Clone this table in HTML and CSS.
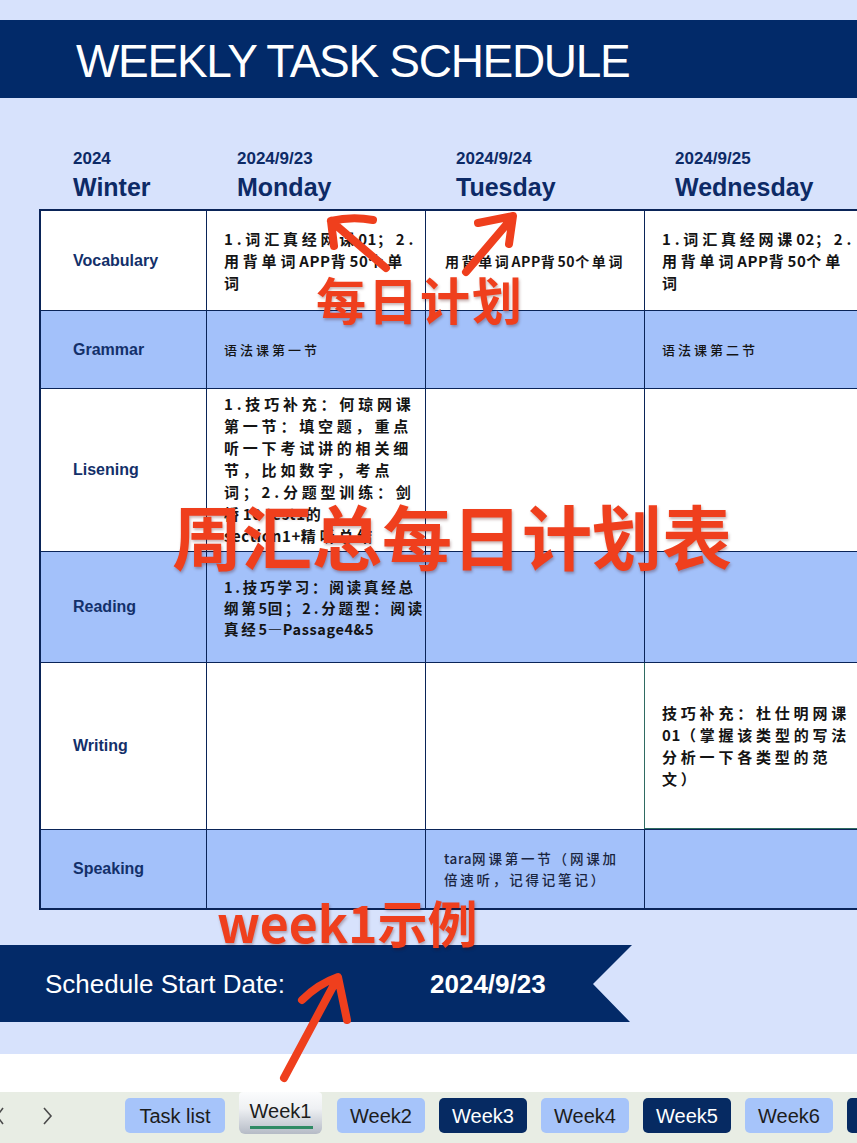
FILE: index.html
```html
<!DOCTYPE html>
<html lang="zh">
<head>
<meta charset="utf-8">
<title>Weekly Task Schedule</title>
<link rel="stylesheet" href="styles.css">
</head>
<body>
<header class="title-bar"><h1>WEEKLY TASK SCHEDULE</h1></header>

<div class="col-heads">
  <div class="col-head first"><div class="date">2024</div><div class="day">Winter</div></div>
  <div class="col-head"><div class="date">2024/9/23</div><div class="day">Monday</div></div>
  <div class="col-head"><div class="date">2024/9/24</div><div class="day">Tuesday</div></div>
  <div class="col-head"><div class="date">2024/9/25</div><div class="day">Wednesday</div></div>
</div>

<div class="schedule">
  <div class="row h-vocab">
    <div class="cell label">Vocabulary</div>
    <div class="cell task"><p>1.词汇真经网课<span class="lat">01</span>；2.<br>用背单词<span class="lat">APP</span>背<span class="lat">50</span>个单<br>词</p></div>
    <div class="cell task tue"><p class="mid">用背单词<span class="lat">APP</span>背<span class="lat">50</span>个单词</p></div>
    <div class="cell task"><p>1.词汇真经网课<span class="lat">02</span>；2.<br>用背单词<span class="lat">APP</span>背<span class="lat">50</span>个单<br>词</p></div>
  </div>
  <div class="row alt h-grammar">
    <div class="cell label">Grammar</div>
    <div class="cell task"><p class="thin">语法课第一节</p></div>
    <div class="cell task"></div>
    <div class="cell task"><p class="thin">语法课第二节</p></div>
  </div>
  <div class="row h-listen">
    <div class="cell label">Lisening</div>
    <div class="cell task"><p>1.技巧补充：何琼网课<br>第一节：填空题，重点<br>听一下考试讲的相关细<br>节，比如数字，考点<br>词；2.分题型训练：剑<br>桥<span class="lat">10 test1</span>的<br><span class="lat">section1+</span>精听总结</p></div>
    <div class="cell task"></div>
    <div class="cell task"></div>
  </div>
  <div class="row alt h-read">
    <div class="cell label">Reading</div>
    <div class="cell task"><p class="dense">1.技巧学习：阅读真经总<br>纲第<span class="lat">5</span>回；2.分题型：阅读<br>真经<span class="lat">5—Passage4&amp;5</span></p></div>
    <div class="cell task"></div>
    <div class="cell task"></div>
  </div>
  <div class="row h-write">
    <div class="cell label">Writing</div>
    <div class="cell task"></div>
    <div class="cell task"></div>
    <div class="cell task selected"><p>技巧补充：杜仕明网课<br><span class="lat">01</span>（掌握该类型的写法<br>分析一下各类型的范<br>文）</p></div>
  </div>
  <div class="row alt h-speak">
    <div class="cell label">Speaking</div>
    <div class="cell task"></div>
    <div class="cell task"><p class="thin speak"><span class="lat">tara</span>网课第一节（网课加<br>倍速听，记得记笔记）</p></div>
    <div class="cell task"></div>
  </div>
</div>

<div class="ribbon">
  <span class="ribbon-label">Schedule Start Date:</span>
  <span class="ribbon-value">2024/9/23</span>
</div>

<div class="sheet-gap"></div>

<nav class="tabbar">
  <div class="tab-nav">
    <svg class="chev" width="60" height="35" viewBox="0 0 60 35"><polyline points="3,10 -3,18 3,26" /><polyline points="44,10 51,18 44,26" /></svg>
  </div>
  <div class="tabs">
    <span class="tab tab-list">Task list</span>
    <span class="tab active">Week1</span>
    <span class="tab">Week2</span>
    <span class="tab dark">Week3</span>
    <span class="tab">Week4</span>
    <span class="tab dark">Week5</span>
    <span class="tab">Week6</span>
    <span class="tab dark"></span>
  </div>
</nav>

<svg class="arrows" width="857" height="1143" viewBox="0 0 857 1143">
  <path d="M386 268 L331 221 M331 221 Q352 216 373 220 M331 221 L334 246" />
  <path d="M466 272 L512 218 M478 223 L513 216 L509 244" />
  <path d="M284 1078 L337 979 M302 1000 Q318 984 338 977 L347 1020" />
</svg>
<div class="annot a-daily">每日计划</div>
<div class="annot a-weekly">周汇总每日计划表</div>
<div class="annot a-week1">week1示例</div>
</body>
</html>
```

FILE: styles.css
```css
* { box-sizing: border-box; margin: 0; padding: 0; }
html, body { width: 857px; height: 1143px; overflow: hidden; }
body {
  background: #d7e2fc;
  font-family: "Liberation Sans", Arial, sans-serif;
  color: #0e2b66;
  position: relative;
}

.title-bar {
  margin-top: 20px;
  height: 78px;
  background: #022a69;
  padding: 18px 0 0 76px;
}
.title-bar h1 {
  font-size: 46px;
  font-weight: 400;
  line-height: 46px;
  letter-spacing: -1.3px;
  color: #fff;
  white-space: nowrap;
}

.col-heads {
  display: grid;
  grid-template-columns: 166px 219px 219px 219px;
  margin-left: 41px;
  height: 111px;
  padding-top: 51px;
  color: #0d2a66;
}
.col-head { padding-left: 30px; white-space: nowrap; }
.col-head.first { padding-left: 32px; }
.date { font-size: 17px; font-weight: 700; line-height: 20px; }
.day { font-size: 25px; font-weight: 700; line-height: 30px; margin-top: 3px; }

.schedule {
  margin-left: 39px;
  width: 827px;
  border: 2px solid #0a2458;
}
.row {
  display: grid;
  grid-template-columns: 166px 219px 219px 219px;
  border-bottom: 1px solid #0a2458;
  background: #fff;
}
.row.alt { background: #a3c1fa; }
.row:last-child { border-bottom: 0; }
.h-vocab { height: 100px; }
.h-grammar { height: 78px; }
.h-listen { height: 163px; }
.h-read { height: 111px; }
.h-write { height: 167px; }
.h-speak { height: 78px; }

.cell {
  border-right: 1px solid #0a2458;
  display: flex;
  align-items: center;
}
.cell.selected {
  box-shadow: inset 0 -1px 0 #2f6b62;
  border-left: 1px solid #2f6b62;
  margin-left: -1px;
}
.label {
  padding-left: 32px;
  font-size: 16px;
  font-weight: 700;
  color: #13306a;
}
.task {
  padding-left: 17px;
  font-family: "Noto Sans CJK SC", "Liberation Sans", sans-serif;
  color: #141414;
}
.task.tue { padding-left: 19px; }
.task p {
  font-size: 15px;
  font-weight: 700;
  line-height: 22px;
  letter-spacing: 3.8px;
  white-space: nowrap;
}
.task .lat { letter-spacing: 0.6px; }
.task p.mid { font-size: 14px; letter-spacing: 2.6px; }
.task p.dense { font-size: 14.5px; letter-spacing: 2.8px; line-height: 21px; }
.task p.thin { font-size: 13px; font-weight: 500; letter-spacing: 3px; }
.task p.speak { font-size: 13.5px; letter-spacing: 2.8px; line-height: 21px; color: #1a2540; margin-left: 1px; }

.ribbon {
  margin-top: 35px;
  width: 632px;
  height: 77px;
  background: #032a68;
  clip-path: polygon(0 0, 632px 0, 593px 39px, 630px 77px, 0 77px);
  display: flex;
  align-items: center;
  color: #fff;
  font-size: 26px;
  line-height: 30px;
}
.ribbon-label { margin-left: 45px; width: 385px; }
.ribbon-value { font-weight: 700; }

.sheet-gap {
  margin-top: 32px;
  height: 38px;
  background: #fff;
}

.tabbar {
  height: 51px;
  background: #e8ede4;
  display: flex;
  align-items: flex-start;
  padding-top: 6px;
}
.tab-nav { width: 125px; height: 35px; flex: none; }
.chev polyline { fill: none; stroke: #4a4a4a; stroke-width: 1.6; }
.tabs { display: flex; gap: 14px; align-items: flex-start; }
.tab {
  flex: none;
  width: 88px;
  height: 35px;
  padding-top: 2px;
  border-radius: 5px;
  background: #a6c4fa;
  color: #1c1c1c;
  font-size: 20px;
  display: flex;
  align-items: center;
  justify-content: center;
}
.tab.tab-list { width: 100px; }
.tab.dark { background: #062a62; color: #fff; }
.tab.active {
  width: 83px;
  height: 42px;
  margin-top: -6px;
  margin-right: 1px;
  border-radius: 4px 4px 6px 6px;
  background: linear-gradient(#fbfcfd, #eef0f3 40%, #b5bbc6);
  align-items: flex-start;
  padding-top: 8px;
  position: relative;
}
.tab.active::after {
  content: "";
  position: absolute;
  left: 11px;
  right: 9px;
  top: 34px;
  height: 3px;
  background: #2f8a64;
}

.arrows {
  position: absolute;
  left: 0;
  top: 0;
  pointer-events: none;
}
.arrows path {
  fill: none;
  stroke: #ef3f1d;
  stroke-width: 8;
  stroke-linecap: round;
  stroke-linejoin: round;
}

.annot {
  position: absolute;
  font-family: "Noto Sans CJK SC", sans-serif;
  font-weight: 700;
  color: #ef3f1d;
  line-height: 1;
  white-space: nowrap;
  text-shadow: 1px 2px 3px rgba(70, 0, 0, 0.3);
}
.a-daily { left: 316px; top: 273px; font-size: 50px; letter-spacing: 2px; }
.a-weekly { left: 172px; top: 500px; font-size: 70px; }
.a-week1 { left: 217px; top: 896px; font-size: 50px; }
```
